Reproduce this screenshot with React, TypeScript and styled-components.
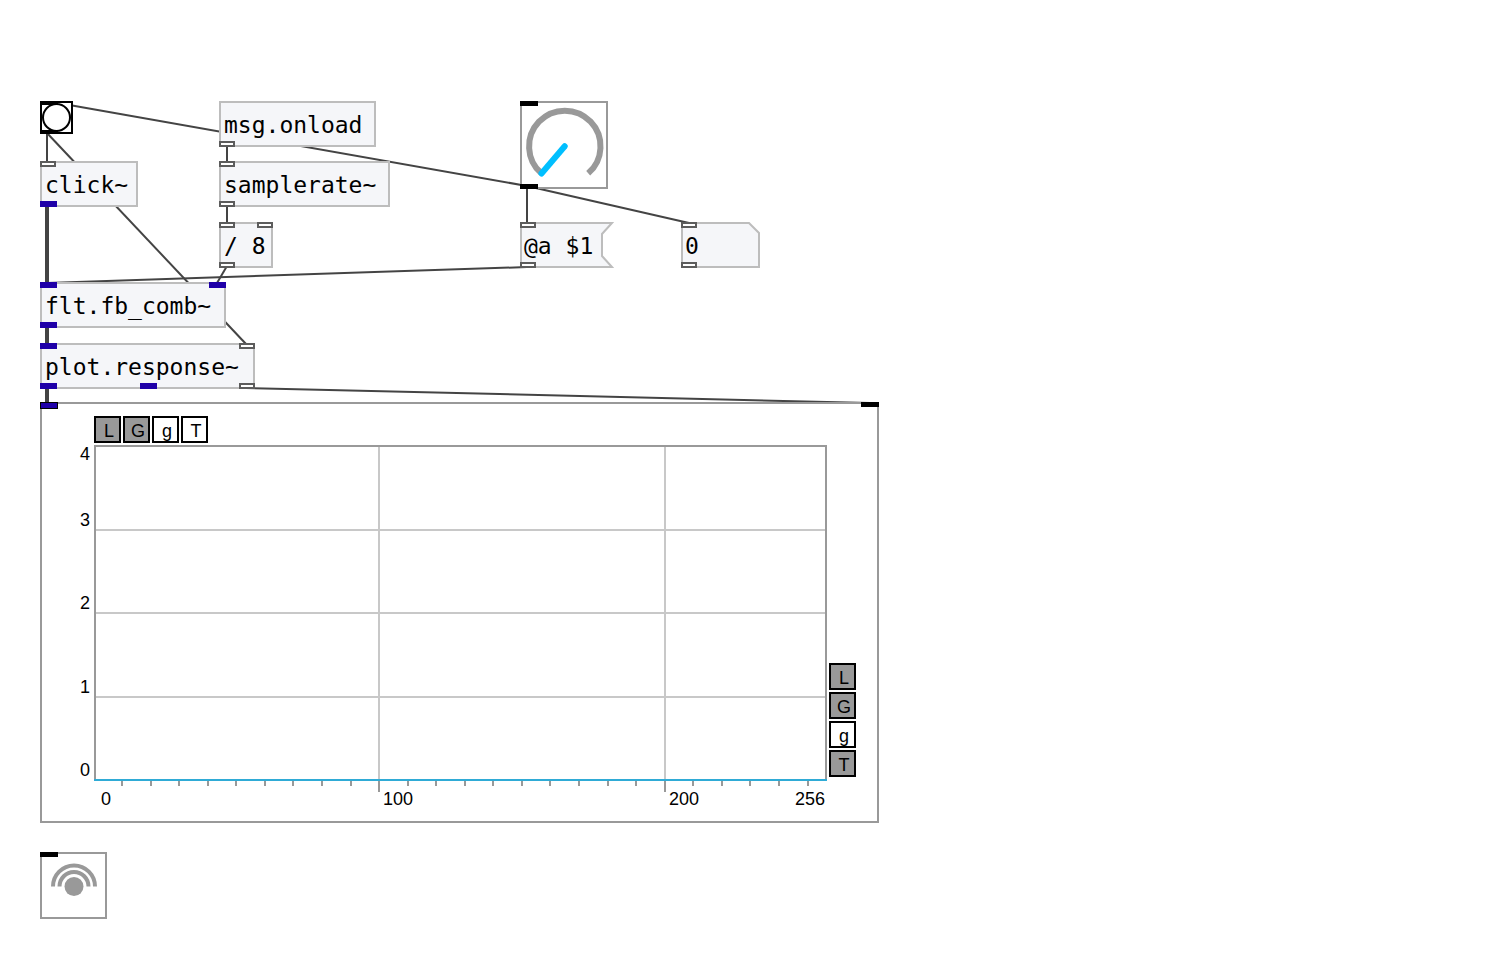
import React, { useState } from "react";
import styled, { createGlobalStyle, css } from "styled-components";

const GlobalStyle = createGlobalStyle`
  * { box-sizing: border-box; }
  body { margin: 0; background: #fff; color: #000; }
`;

const mono = css`
  font-family: "DejaVu Sans Mono", monospace;
  font-size: 23px;
  line-height: 40px;
  color: #000;
`;

const Canvas = styled.main`
  position: relative;
  min-height: 100vh;
  overflow: hidden;
`;

const Wires = styled.svg`
  display: block;
  width: 100%;
  height: 940px;
  stroke: #444;
  stroke-width: 2;
`;

const Node = styled.div<{ $x: number; $y: number; $w: number }>`
  position: absolute;
  left: ${(p) => p.$x}px;
  top: ${(p) => p.$y}px;
  width: ${(p) => p.$w}px;
`;

const ObjectBox = styled(Node)`
  ${mono}
  padding: 2px 2px 0 3px;
  border: 2px solid #bdbdbd;
  background: #f5f6f9;
  white-space: pre;
`;

const ShapedBox = styled(Node)`
  height: 46px;
`;

const Outline = styled.svg`
  position: absolute;
  left: 0;
  top: 0;
  fill: #f5f6f9;
  stroke: #bdbdbd;
  stroke-width: 2;
`;

const MessageButton = styled.button`
  ${mono}
  position: relative;
  display: block;
  width: 100%;
  padding: 4px 0 0 4px;
  border: 0;
  background: none;
  text-align: left;
  white-space: pre;
`;

const NumberInput = styled.input`
  ${mono}
  position: relative;
  display: block;
  width: 100%;
  height: 46px;
  padding: 2px 0 0 4px;
  border: 0;
  outline: 0;
  background: none;
`;

const PortRow = styled.div<{ $side: "top" | "bottom"; $inset: number }>`
  position: absolute;
  left: ${(p) => -p.$inset}px;
  right: ${(p) => -p.$inset}px;
  ${(p) => p.$side}: ${(p) => -p.$inset}px;
  display: flex;
  justify-content: space-between;
`;

type PortKind = "control" | "signal" | "black" | "panel";

const portStyles = {
  control: css`width: 16px; border: 2px solid #5c5c5c; background: #fff;`,
  signal: css`width: 17px; background: #1f00a8;`,
  black: css`width: 18px; height: 5px; background: #000;`,
  panel: css`width: 18px; height: 7px; border: 1px solid #000; background: #1f00a8;`,
};

const Port = styled.span<{ $kind: PortKind }>`
  height: 6px;
  ${(p) => portStyles[p.$kind]}
`;

const WidgetFrame = styled(Node)`
  border: 2px solid #999;
  background: #fff;
`;

const BangButton = styled.button`
  display: block;
  width: 33px;
  height: 33px;
  padding: 0;
  border: 2px solid #000;
  background: #fff;
`;

const Drawing = styled.svg`
  display: block;
`;

const KnobInput = styled.input`
  position: absolute;
  inset: 0;
  width: 100%;
  height: 100%;
  margin: 0;
  opacity: 0;
`;

const DspButton = styled.button`
  display: block;
  width: 100%;
  padding: 0;
  border: 0;
  background: none;
`;

const PlotPanel = styled(WidgetFrame)`
  padding: 12px 22px 10px 34px;
`;

const PlotBody = styled.div`
  display: flex;
  gap: 1px;
  margin-top: 2px;
`;

const ToggleGroup = styled.div<{ $column?: boolean }>`
  display: flex;
  flex-direction: ${(p) => (p.$column ? "column" : "row")};
  gap: 2px;
  ${(p) => (p.$column ? "align-self: flex-end; padding-bottom: 34px;" : "padding-left: 18px;")}
`;

const ToggleButton = styled.button<{ $on: boolean }>`
  width: 27px;
  height: 27px;
  padding: 2px 0 0 3px;
  border: 2px solid #000;
  background: ${(p) => (p.$on ? "#999" : "#fff")};
  color: #000;
  font: 18px/20px "Liberation Sans", Arial, sans-serif;
  text-align: center;
`;

const Chart = styled.svg`
  display: block;
  flex: none;
  font-family: "Liberation Sans", Arial, sans-serif;
  font-size: 18px;
`;

function Ports({ side, kinds, inset = 2 }: { side: "top" | "bottom"; kinds: PortKind[]; inset?: number }) {
  return (
    <PortRow $side={side} $inset={inset}>
      {kinds.map((kind, i) => (
        <Port key={i} $kind={kind} />
      ))}
    </PortRow>
  );
}

interface PatchObject {
  text: string;
  x: number;
  y: number;
  w: number;
  inlets: PortKind[];
  outlets: PortKind[];
}

const objects: PatchObject[] = [
  { text: "msg.onload", x: 219, y: 101, w: 157, inlets: [], outlets: ["control"] },
  { text: "click~", x: 40, y: 161, w: 98, inlets: ["control"], outlets: ["signal"] },
  { text: "samplerate~", x: 219, y: 161, w: 171, inlets: ["control"], outlets: ["control"] },
  { text: "/ 8", x: 219, y: 222, w: 54, inlets: ["control", "control"], outlets: ["control"] },
  { text: "flt.fb_comb~", x: 40, y: 282, w: 186, inlets: ["signal", "signal"], outlets: ["signal"] },
  { text: "plot.response~", x: 40, y: 343, w: 215, inlets: ["signal", "control"], outlets: ["signal", "signal", "control"] },
];

const wires: [number, number, number, number][] = [
  [47, 133, 47, 163],
  [47, 133, 246, 344],
  [227, 145, 227, 163],
  [227, 206, 227, 224],
  [227, 266, 217, 283],
  [527, 186, 58, 103],
  [527, 187, 527, 224],
  [527, 186, 689, 223],
  [527, 267, 47, 283],
  [246, 388, 870, 403],
];

const signalWires: [number, number, number, number][] = [
  [47, 206, 47, 284],
  [47, 326, 47, 345],
  [47, 387, 47, 404],
];

const toggleNames = ["L", "G", "g", "T"];

function Toggles({ axis, initial, column }: { axis: string; initial: boolean[]; column?: boolean }) {
  const [state, setState] = useState(initial);
  return (
    <ToggleGroup $column={column} role="group" aria-label={`${axis} axis`}>
      {toggleNames.map((name, i) => (
        <ToggleButton
          key={name}
          $on={state[i]}
          aria-pressed={state[i]}
          onClick={() => setState(state.map((v, j) => (i === j ? !v : v)))}
        >
          {name}
        </ToggleButton>
      ))}
    </ToggleGroup>
  );
}

function ResponseChart() {
  const tickX = (i: number) => Math.round(17.5 + i * 28.56);
  return (
    <Chart width="752" height="366" role="img" aria-label="Response plot">
      <g stroke="#c8c8c8" strokeWidth="2">
        {[85, 168, 252].map((y) => (
          <line key={y} x1="19" x2="750" y1={y} y2={y} />
        ))}
        {[303, 589].map((x) => (
          <line key={x} x1={x} x2={x} y1="1" y2="335" />
        ))}
      </g>
      <g stroke="#999" strokeWidth="2" fill="none">
        {Array.from({ length: 25 }, (_, i) => i + 1).map((i) => (
          <line key={i} x1={tickX(i)} x2={tickX(i)} y1="335" y2={i % 10 ? 341 : 347} />
        ))}
        <path d="M19 335V1H750V335" />
      </g>
      <line x1="18" x2="751" y1="335" y2="335" stroke="#2fabd6" strokeWidth="2" />
      <g textAnchor="end">
        <text x="14" y="15">4</text>
        <text x="14" y="81">3</text>
        <text x="14" y="164">2</text>
        <text x="14" y="248">1</text>
        <text x="14" y="331">0</text>
        <text x="749" y="360">256</text>
      </g>
      <text x="25" y="360">0</text>
      <text x="307" y="360">100</text>
      <text x="593" y="360">200</text>
    </Chart>
  );
}

export default function App() {
  const [number, setNumber] = useState("0");
  return (
    <>
      <GlobalStyle />
      <Canvas>
        <Wires aria-hidden="true">
          {wires.map(([x1, y1, x2, y2], i) => (
            <line key={i} x1={x1} y1={y1} x2={x2} y2={y2} />
          ))}
          {signalWires.map(([x1, y1, x2, y2], i) => (
            <line key={i} x1={x1} y1={y1} x2={x2} y2={y2} strokeWidth="4" />
          ))}
        </Wires>

        <Node $x={40} $y={101} $w={33}>
          <BangButton aria-label="Bang">
            <Drawing width="29" height="29">
              <path d="M0 0H16V2H0ZM0 27H16V29H0Z" />
              <circle cx="14.5" cy="14.5" r="13.5" fill="#fff" stroke="#000" strokeWidth="2" />
            </Drawing>
          </BangButton>
        </Node>

        {objects.map((o) => (
          <ObjectBox key={o.text} $x={o.x} $y={o.y} $w={o.w}>
            {o.text}
            <Ports side="top" kinds={o.inlets} />
            <Ports side="bottom" kinds={o.outlets} />
          </ObjectBox>
        ))}

        <WidgetFrame $x={520} $y={101} $w={88}>
          <Drawing width="84" height="84" aria-hidden="true">
            <path d="M19.4 70.3A35.7 35.7 0 1 1 66.2 70.3" fill="none" stroke="#999" strokeWidth="6" />
            <path d="M42.7 43.2L19.5 70.5" stroke="#00bfff" strokeWidth="6" strokeLinecap="round" />
          </Drawing>
          <KnobInput type="range" min="0" max="1" step="0.01" defaultValue="0" aria-label="Feedback" />
          <Ports side="top" kinds={["black"]} />
          <Ports side="bottom" kinds={["black"]} />
        </WidgetFrame>

        <ShapedBox $x={520} $y={222} $w={93}>
          <Outline width="94" height="46">
            <path d="M1 1H92L82 12V34L92 45H1Z" />
          </Outline>
          <MessageButton>@a $1</MessageButton>
          <Ports side="top" kinds={["control"]} inset={0} />
          <Ports side="bottom" kinds={["control"]} inset={0} />
        </ShapedBox>

        <ShapedBox $x={681} $y={222} $w={79}>
          <Outline width="79" height="46">
            <path d="M1 1H68L78 11V45H1Z" />
          </Outline>
          <NumberInput aria-label="Number" value={number} onChange={(e) => setNumber(e.target.value)} />
          <Ports side="top" kinds={["control"]} inset={0} />
          <Ports side="bottom" kinds={["control"]} inset={0} />
        </ShapedBox>

        <PlotPanel $x={40} $y={402} $w={839}>
          <Toggles axis="X" initial={[true, true, false, false]} />
          <PlotBody>
            <ResponseChart />
            <Toggles axis="Y" initial={[true, true, false, true]} column />
          </PlotBody>
          <Ports side="top" kinds={["panel", "black"]} />
        </PlotPanel>

        <WidgetFrame $x={40} $y={852} $w={67}>
          <DspButton aria-label="Toggle audio">
            <Drawing width="63" height="63">
              <circle cx="32" cy="32.5" r="9.5" fill="#999" />
              <path d="M17.5 32.5a14.5 14.5 0 0 1 29 0M11 32.5a21 21 0 0 1 42 0" fill="none" stroke="#999" strokeWidth="4" />
            </Drawing>
          </DspButton>
          <Ports side="top" kinds={["black"]} />
        </WidgetFrame>
      </Canvas>
    </>
  );
}
